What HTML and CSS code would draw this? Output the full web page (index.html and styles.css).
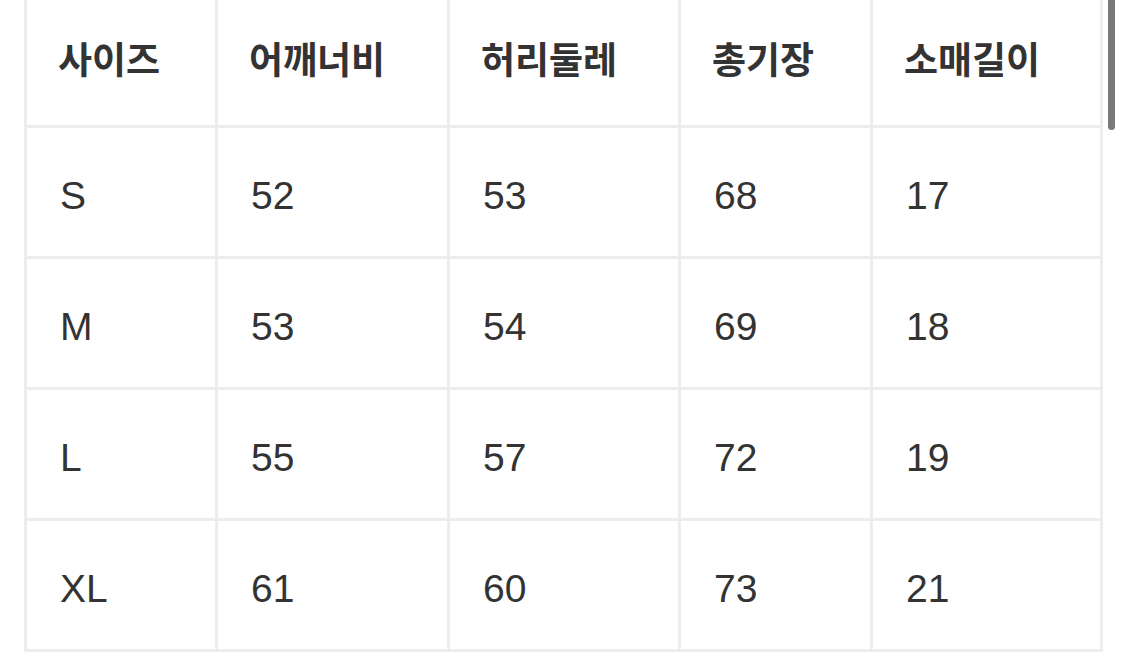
FILE: index.html
```html
<!DOCTYPE html>
<html lang="ko">
<head>
<meta charset="utf-8">
<link rel="stylesheet" href="styles.css">
</head>
<body>
<div class="page">
  <table class="size-table">
    <colgroup>
      <col class="c1"><col class="c2"><col class="c3"><col class="c4"><col class="c5">
    </colgroup>
    <thead>
      <tr><th>사이즈</th><th>어깨너비</th><th>허리둘레</th><th>총기장</th><th>소매길이</th></tr>
    </thead>
    <tbody>
      <tr><td>S</td><td>52</td><td>53</td><td>68</td><td>17</td></tr>
      <tr><td>M</td><td>53</td><td>54</td><td>69</td><td>18</td></tr>
      <tr><td>L</td><td>55</td><td>57</td><td>72</td><td>19</td></tr>
      <tr><td>XL</td><td>61</td><td>60</td><td>73</td><td>21</td></tr>
    </tbody>
  </table>
  <div class="scrollbar"></div>
</div>
</body>
</html>
```
FILE: styles.css
```css
html, body {
  margin: 0;
  padding: 0;
  background: #fff;
  overflow: hidden;
}
.page {
  position: relative;
  width: 1125px;
  height: 663px;
  padding-left: 24px;
  box-sizing: border-box;
}
.size-table {
  border-collapse: collapse;
  table-layout: fixed;
  width: 1076px;
  margin-top: -6px;
  color: #333;
  font-family: "Liberation Sans", Arial, "Noto Sans CJK KR", sans-serif;
}
.c1 { width: 191px; }
.c2 { width: 232px; }
.c3 { width: 231px; }
.c4 { width: 192px; }
.c5 { width: 230px; }
.size-table th,
.size-table td {
  border: 3px solid #ededed;
  height: 131px;
  padding: 0 0 0 33px;
  text-align: left;
  vertical-align: middle;
  box-sizing: border-box;
}
.size-table th {
  font-family: "Noto Sans CJK KR", "Noto Sans", sans-serif;
  font-weight: 700;
  font-size: 37px;
  color: #333;
  padding-left: 31px;
  padding-bottom: 6px;
}
.size-table td {
  font-size: 39px;
  font-weight: 400;
  padding-top: 7px;
}
.scrollbar {
  position: absolute;
  top: 0;
  left: 1108px;
  width: 7px;
  height: 136px;
  background: #7a7a7a;
  border-radius: 0 0 4px 4px;
}
```
